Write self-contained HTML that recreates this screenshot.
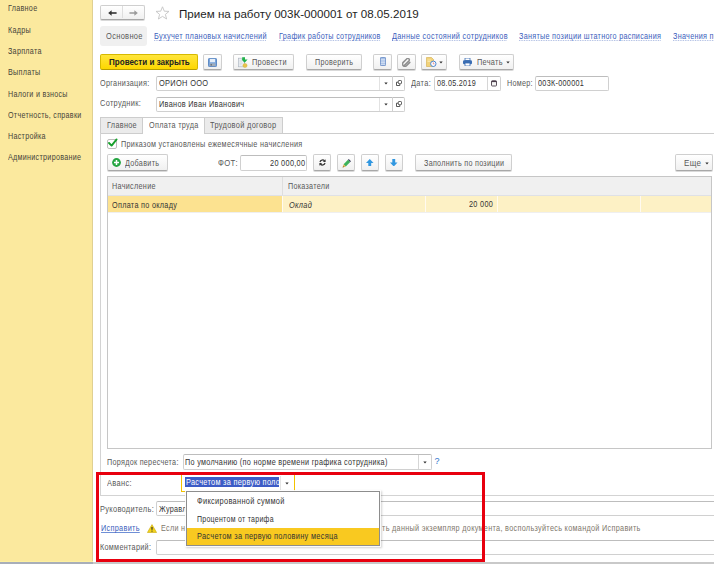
<!DOCTYPE html>
<html><head><meta charset="utf-8">
<style>
*{box-sizing:border-box;margin:0;padding:0}
html,body{width:714px;height:564px;overflow:hidden;background:#fff;font-family:"Liberation Sans",sans-serif;font-size:8.5px;color:#4d4d4d}
.a{position:absolute}
.t{position:absolute;white-space:nowrap;transform-origin:0 0}
#side{position:absolute;left:0;top:0;width:93px;height:564px;background:#fbe99e;border-right:1px solid #e0d092}
.btn{position:absolute;border:1px solid #cfcfcf;border-bottom-color:#a8a8a8;border-radius:2px;background:linear-gradient(#fff,#f0f0f0);box-shadow:0 1px 0 #d9d9d9}
.inp{position:absolute;border:1px solid #d0d0d0;border-top-color:#bdbdbd;border-radius:2px;background:#fff}
</style></head><body>
<div id="side"></div>
<div class="t" style="left:8px;top:3px;line-height:10px;color:#46443a;letter-spacing:0.35px;transform:scaleX(0.842);">Главное</div>
<div class="t" style="left:8px;top:25px;line-height:10px;color:#46443a;letter-spacing:0.35px;transform:scaleX(0.847);">Кадры</div>
<div class="t" style="left:8px;top:46px;line-height:10px;color:#46443a;letter-spacing:0.35px;transform:scaleX(0.842);">Зарплата</div>
<div class="t" style="left:8px;top:67px;line-height:10px;color:#46443a;letter-spacing:0.35px;transform:scaleX(0.847);">Выплаты</div>
<div class="t" style="left:8px;top:89px;line-height:10px;color:#46443a;letter-spacing:0.35px;transform:scaleX(0.838);">Налоги и взносы</div>
<div class="t" style="left:8px;top:110px;line-height:10px;color:#46443a;letter-spacing:0.35px;transform:scaleX(0.837);">Отчетность, справки</div>
<div class="t" style="left:8px;top:131px;line-height:10px;color:#46443a;letter-spacing:0.35px;transform:scaleX(0.842);">Настройка</div>
<div class="t" style="left:8px;top:152px;line-height:10px;color:#46443a;letter-spacing:0.35px;transform:scaleX(0.843);">Администрирование</div>
<div class="t" style="left:179px;top:7px;line-height:14px;color:#1e1e1e;font-size:11.6px;">Прием на работу 003К-000001 от 08.05.2019</div>
<div class="a" style="left:100px;top:26px;width:47px;height:20px;background:#f0f0f0;border-radius:3px"></div>
<div class="t" style="left:106px;top:31px;line-height:10px;color:#585858;letter-spacing:0.35px;transform:scaleX(0.881);">Основное</div>
<div class="t" style="left:154px;top:31px;line-height:10px;color:#3b5ebc;letter-spacing:0.35px;transform:scaleX(0.867);text-decoration:underline dotted #a8b8e0;text-underline-offset:1px;text-decoration-skip-ink:none;">Бухучет плановых начислений</div>
<div class="t" style="left:278.6px;top:31px;line-height:10px;color:#3b5ebc;letter-spacing:0.35px;transform:scaleX(0.846);text-decoration:underline dotted #a8b8e0;text-underline-offset:1px;text-decoration-skip-ink:none;">График работы сотрудников</div>
<div class="t" style="left:392px;top:31px;line-height:10px;color:#3b5ebc;letter-spacing:0.35px;transform:scaleX(0.860);text-decoration:underline dotted #a8b8e0;text-underline-offset:1px;text-decoration-skip-ink:none;">Данные состояний сотрудников</div>
<div class="t" style="left:519.4px;top:31px;line-height:10px;color:#3b5ebc;letter-spacing:0.35px;transform:scaleX(0.848);text-decoration:underline dotted #a8b8e0;text-underline-offset:1px;text-decoration-skip-ink:none;">Занятые позиции штатного расписания</div>
<div class="t" style="left:673.4px;top:31px;line-height:10px;color:#3b5ebc;letter-spacing:0.35px;transform:scaleX(0.848);text-decoration:underline dotted #a8b8e0;text-underline-offset:1px;text-decoration-skip-ink:none;">Значения показателей</div>
<div class="a" style="left:100px;top:54px;width:98px;height:16px;border:1px solid #d6b900;border-bottom-color:#b89d00;border-radius:2px;background:linear-gradient(#ffe53b,#fdd700)"></div>
<div class="t" style="left:109px;top:57px;line-height:10px;color:#222;font-weight:bold;transform:scaleX(0.948);">Провести и закрыть</div>
<div class="btn" style="left:203px;top:54px;width:19px;height:16px;"></div>
<div class="btn" style="left:233px;top:54px;width:61px;height:16px;"></div>
<div class="t" style="left:251.5px;top:57px;line-height:10px;color:#585858;letter-spacing:0.35px;transform:scaleX(0.864);">Провести</div>
<div class="btn" style="left:306px;top:54px;width:56px;height:16px;"></div>
<div class="t" style="left:315px;top:57px;line-height:10px;color:#585858;letter-spacing:0.35px;transform:scaleX(0.839);">Проверить</div>
<div class="btn" style="left:373px;top:54px;width:19px;height:16px;"></div>
<div class="btn" style="left:397px;top:54px;width:19px;height:16px;"></div>
<div class="btn" style="left:421px;top:54px;width:26px;height:16px;"></div>
<div class="btn" style="left:459px;top:54px;width:55px;height:16px;"></div>
<div class="t" style="left:477px;top:57px;line-height:10px;color:#585858;letter-spacing:0.35px;transform:scaleX(0.865);">Печать</div>
<div class="t" style="left:100px;top:78px;line-height:10px;color:#585858;letter-spacing:0.35px;transform:scaleX(0.856);">Организация:</div>
<div class="inp" style="left:156px;top:76px;width:249px;height:15px;"></div>
<div class="a" style="left:379px;top:77px;width:1px;height:13px;background:#e2e2e2"></div>
<div class="a" style="left:392px;top:76px;width:1px;height:15px;background:#cfcfcf"></div>
<div class="t" style="left:159px;top:78px;line-height:10px;color:#333333;letter-spacing:0.35px;transform:scaleX(0.875);">ОРИОН ООО</div>
<div class="t" style="left:411px;top:78px;line-height:10px;color:#585858;letter-spacing:0.35px;transform:scaleX(0.872);">Дата:</div>
<div class="inp" style="left:434px;top:76px;width:67px;height:15px;"></div>
<div class="a" style="left:487px;top:77px;width:1px;height:13px;background:#d6d6d6"></div>
<div class="t" style="left:436.5px;top:78px;line-height:10px;color:#333333;letter-spacing:0.35px;transform:scaleX(0.847);">08.05.2019</div>
<div class="t" style="left:506.7px;top:78px;line-height:10px;color:#585858;letter-spacing:0.35px;transform:scaleX(0.846);">Номер:</div>
<div class="inp" style="left:535px;top:76px;width:74px;height:15px;"></div>
<div class="t" style="left:538.3px;top:78px;line-height:10px;color:#333333;letter-spacing:0.35px;transform:scaleX(0.851);">003К-000001</div>
<div class="t" style="left:100px;top:98px;line-height:10px;color:#585858;letter-spacing:0.35px;transform:scaleX(0.872);">Сотрудник:</div>
<div class="inp" style="left:156px;top:97px;width:249px;height:15px;"></div>
<div class="a" style="left:379px;top:98px;width:1px;height:13px;background:#e2e2e2"></div>
<div class="a" style="left:392px;top:97px;width:1px;height:15px;background:#cfcfcf"></div>
<div class="t" style="left:159.2px;top:99px;line-height:10px;color:#333333;letter-spacing:0.35px;transform:scaleX(0.861);">Иванов Иван Иванович</div>
<div class="a" style="left:100px;top:133px;width:614px;height:1px;background:#cdcdcd"></div>
<div class="a" style="left:100px;top:117px;width:43px;height:17px;background:#ebebeb;border:1px solid #cdcdcd"></div>
<div class="t" style="left:106.6px;top:120px;line-height:10px;color:#585858;letter-spacing:0.35px;transform:scaleX(0.856);">Главное</div>
<div class="a" style="left:142px;top:117px;width:63px;height:17px;background:#fff;border:1px solid #cdcdcd;border-bottom:none"></div>
<div class="t" style="left:148.8px;top:120px;line-height:10px;color:#585858;letter-spacing:0.35px;transform:scaleX(0.857);">Оплата труда</div>
<div class="a" style="left:204px;top:117px;width:79px;height:17px;background:#ebebeb;border:1px solid #cdcdcd"></div>
<div class="t" style="left:210.4px;top:120px;line-height:10px;color:#585858;letter-spacing:0.35px;transform:scaleX(0.873);">Трудовой договор</div>
<div class="a" style="left:100px;top:133px;width:1px;height:363px;background:#d3d3d3"></div>
<div class="a" style="left:100px;top:495px;width:614px;height:1px;background:#d3d3d3"></div>
<div class="a" style="left:107px;top:139px;width:10px;height:10px;border:1px solid #bdbdbd;border-radius:2px;background:#fff"></div>
<div class="t" style="left:120.8px;top:139px;line-height:10px;color:#585858;letter-spacing:0.35px;transform:scaleX(0.854);">Приказом установлены ежемесячные начисления</div>
<div class="btn" style="left:107px;top:154px;width:61px;height:17px;"></div>
<div class="t" style="left:125.3px;top:158px;line-height:10px;color:#585858;letter-spacing:0.35px;transform:scaleX(0.850);">Добавить</div>
<div class="t" style="left:217.7px;top:158px;line-height:10px;color:#585858;letter-spacing:0.35px;transform:scaleX(0.908);">ФОТ:</div>
<div class="inp" style="left:240px;top:155px;width:67px;height:16px;"></div>
<div class="t" style="left:270.1px;top:158px;line-height:10px;color:#333333;letter-spacing:0.35px;transform:scaleX(0.864);">20 000,00</div>
<div class="btn" style="left:313px;top:154px;width:18px;height:17px;"></div>
<div class="btn" style="left:337px;top:154px;width:18px;height:17px;"></div>
<div class="btn" style="left:361px;top:154px;width:18px;height:17px;"></div>
<div class="btn" style="left:385px;top:154px;width:18px;height:17px;"></div>
<div class="btn" style="left:415px;top:154px;width:97px;height:17px;"></div>
<div class="t" style="left:423.6px;top:158px;line-height:10px;color:#585858;letter-spacing:0.35px;transform:scaleX(0.845);">Заполнить по позиции</div>
<div class="btn" style="left:675px;top:154px;width:38px;height:17px;"></div>
<div class="t" style="left:684px;top:158px;line-height:10px;color:#585858;letter-spacing:0.35px;transform:scaleX(0.943);">Еще</div>
<div class="a" style="left:107px;top:176px;width:605px;height:273px;border:1px solid #c6c6c6;background:#fff"></div>
<div class="a" style="left:108px;top:177px;width:603px;height:18px;background:#f0f0f0"></div>
<div class="a" style="left:108px;top:195px;width:603px;height:1px;background:#dfe1e6"></div>
<div class="a" style="left:282px;top:177px;width:1px;height:18px;background:#dedede"></div>
<div class="t" style="left:112.4px;top:181px;line-height:10px;color:#585858;letter-spacing:0.35px;transform:scaleX(0.851);">Начисление</div>
<div class="t" style="left:288px;top:181px;line-height:10px;color:#585858;letter-spacing:0.35px;transform:scaleX(0.844);">Показатели</div>
<div class="a" style="left:108px;top:196px;width:603px;height:16px;background:#fdf1c5"></div>
<div class="a" style="left:108px;top:196px;width:174px;height:16px;background:#fce290"></div>
<div class="a" style="left:108px;top:212px;width:603px;height:1px;background:#efefef"></div>
<div class="a" style="left:282px;top:196px;width:1px;height:16px;background:#fffaf0"></div>
<div class="a" style="left:425px;top:196px;width:1px;height:16px;background:#fffaf0"></div>
<div class="a" style="left:497px;top:196px;width:1px;height:16px;background:#fffaf0"></div>
<div class="a" style="left:640px;top:196px;width:1px;height:16px;background:#fffaf0"></div>
<div class="t" style="left:112.4px;top:200px;line-height:10px;color:#333333;letter-spacing:0.35px;transform:scaleX(0.853);">Оплата по окладу</div>
<div class="t" style="left:288.5px;top:200px;line-height:10px;color:#333333;font-style:italic;letter-spacing:0.35px;transform:scaleX(0.869);">Оклад</div>
<div class="t" style="left:468.5px;top:199px;line-height:10px;color:#333333;letter-spacing:0.35px;transform:scaleX(0.858);">20 000</div>
<div class="t" style="left:107px;top:457px;line-height:10px;color:#585858;letter-spacing:0.35px;transform:scaleX(0.845);">Порядок пересчета:</div>
<div class="inp" style="left:182.7px;top:454px;width:249px;height:16px;"></div>
<div class="a" style="left:418px;top:455px;width:1px;height:14px;background:#d6d6d6"></div>
<div class="t" style="left:185px;top:457px;line-height:10px;color:#333333;letter-spacing:0.35px;transform:scaleX(0.852);">По умолчанию (по норме времени графика сотрудника)</div>
<div class="t" style="left:434.5px;top:456px;line-height:10px;color:#2f74cc;font-size:9px">?</div>
<div class="t" style="left:107px;top:478px;line-height:10px;color:#585858;letter-spacing:0.35px;transform:scaleX(0.879);">Аванс:</div>
<div class="t" style="left:100.2px;top:504px;line-height:10px;color:#585858;letter-spacing:0.35px;transform:scaleX(0.876);">Руководитель:</div>
<div class="inp" style="left:156px;top:501px;width:560px;height:15px;"></div>
<div class="t" style="left:158.5px;top:504px;line-height:10px;color:#333333;letter-spacing:0.35px;transform:scaleX(0.850);">Журавлев Сергей Петрович</div>
<div class="t" style="left:100.8px;top:523px;line-height:10px;color:#3b5ebc;letter-spacing:0.35px;transform:scaleX(0.859);text-decoration:underline #6f8fd6;text-underline-offset:1px;text-decoration-skip-ink:none;">Исправить</div>
<div class="t" style="left:160.7px;top:523px;line-height:10px;color:#80776b;letter-spacing:0.35px;transform:scaleX(0.850);">Если необходимо изменить</div>
<div class="t" style="left:381.7px;top:523px;line-height:10px;color:#80776b;letter-spacing:0.35px;transform:scaleX(0.856);">ть данный экземпляр документа, воспользуйтесь командой Исправить</div>
<div class="t" style="left:100.2px;top:542px;line-height:10px;color:#585858;letter-spacing:0.35px;transform:scaleX(0.852);">Комментарий:</div>
<div class="inp" style="left:156px;top:540px;width:560px;height:15px;"></div>
<div class="a" style="left:181px;top:473px;width:114px;height:19px;border:1px solid #f3c200;background:#fff"></div>
<div class="a" style="left:280px;top:476px;width:1px;height:14px;background:#e4e4e4"></div>
<div class="a" style="left:184.9px;top:477.2px;width:94px;height:9.7px;background:#3d5cc6"></div>
<div class="a" style="left:184.9px;top:470px;width:94px;height:20px;overflow:hidden">
<div class="t" style="left:0.8px;top:7px;line-height:10px;color:#fff;letter-spacing:0.35px;transform:scaleX(0.862);">Расчетом за первую половину месяца</div>
</div>
<div class="a" style="left:0px;top:562px;width:714px;height:2px;background:#c9c9c9"></div>
<div class="a" style="left:0px;top:562px;width:93px;height:2px;background:#a8aeb9"></div>
<div class="a" style="left:0px;top:561px;width:93px;height:1px;background:#fdf0a0"></div>
<div class="a" style="left:96px;top:472px;width:389px;height:90px;border:3px solid #e8000e"></div>
<div class="a" style="left:186px;top:491px;width:194px;height:55px;background:#fff;border:1px solid #8d8d8d;box-shadow:0 0 0 1px rgba(255,255,255,0.9),1px 1px 2px 1px rgba(0,0,0,0.18)"></div>
<div class="t" style="left:196.8px;top:496px;line-height:10px;color:#333333;letter-spacing:0.35px;transform:scaleX(0.874);">Фиксированной суммой</div>
<div class="t" style="left:196.8px;top:514px;line-height:10px;color:#333333;letter-spacing:0.35px;transform:scaleX(0.820);">Процентом от тарифа</div>
<div class="a" style="left:187px;top:527.6px;width:192px;height:17px;background:#f9c920"></div>
<div class="t" style="left:196.8px;top:531px;line-height:10px;color:#333333;letter-spacing:0.35px;transform:scaleX(0.866);">Расчетом за первую половину месяца</div>
<div class="btn" style="left:100px;top:5px;width:45px;height:15px;"></div>
<div class="a" style="left:122px;top:6px;width:1px;height:12px;background:#dedede"></div>
<svg class="a" style="left:107.5px;top:9.5px" width="9" height="6" viewBox="0 0 9 6"><path d="M8.6 3 H2.5" stroke="#333" stroke-width="1.6"/><path d="M0.2 3 L3.6 0.2 V5.8 Z" fill="#333"/></svg>
<svg class="a" style="left:129px;top:9.5px" width="9" height="6" viewBox="0 0 9 6"><path d="M0.4 3 H6.5" stroke="#9a9a9a" stroke-width="1.5"/><path d="M8.8 3 L5.4 0.2 V5.8 Z" fill="#9a9a9a"/></svg>
<svg class="a" style="left:155px;top:6px" width="15" height="14" viewBox="0 0 15 14"><path d="M7.5 0.8 L9.3 5.2 L14 5.4 L10.4 8.4 L11.6 13 L7.5 10.4 L3.4 13 L4.6 8.4 L1 5.4 L5.7 5.2 Z" fill="#fff" stroke="#c4c4c4" stroke-width="0.9"/></svg>
<svg class="a" style="left:208px;top:57.5px" width="9" height="9" viewBox="0 0 9 9"><rect x="0.45" y="0.45" width="8.1" height="8.1" rx="0.9" fill="#7aa5dc" stroke="#4f7fc0" stroke-width="0.9"/><rect x="2" y="0.9" width="5" height="3.3" fill="#e6eef8"/><rect x="1.7" y="5.5" width="5.6" height="2.6" fill="#a3adb8"/><rect x="2.6" y="6" width="1.2" height="1.6" fill="#5d6670"/></svg>
<svg class="a" style="left:237.5px;top:56.5px" width="10" height="11" viewBox="0 0 10 11"><rect x="0.4" y="1.2" width="6" height="8.6" fill="#eef1f5" stroke="#b0b8c2" stroke-width="0.7"/><path d="M1.4 3.3H4.8M1.4 4.8H4.2M1.4 6.3H4.5M1.4 7.8H3.6" stroke="#c2cad3" stroke-width="0.5"/><path d="M4.2 0.2 H7 V2.6 H9.6 L6.6 5.8 L3.6 2.6 H4.2 Z" fill="#22b24c"/><circle cx="7" cy="8.5" r="2.1" fill="#e8c44a" stroke="#d1a935" stroke-width="0.4"/></svg>
<svg class="a" style="left:380px;top:57.3px" width="6" height="9" viewBox="0 0 6 9"><rect x="0.4" y="0.4" width="5.2" height="8.2" rx="0.9" fill="#9bb8e3" stroke="#5b82c2" stroke-width="0.8"/><path d="M0.8 2.3H5.2M0.8 4H5.2M0.8 5.7H5.2M0.8 7.3H5.2" stroke="#f2f6fc" stroke-width="0.7"/></svg>
<svg class="a" style="left:402px;top:57.5px" width="9" height="9" viewBox="0 0 9 9"><path d="M2.2 7.6 L7 2.8 A1.5 1.5 0 0 0 4.9 0.7 L1.2 4.4 A2.3 2.3 0 0 0 4.5 7.7 L7.8 4.4" stroke="#8f8f8f" stroke-width="1.5" fill="none" stroke-linecap="round"/></svg>
<svg class="a" style="left:425.5px;top:57px" width="11" height="10" viewBox="0 0 11 10"><path d="M0.5 0.5 H5.5 L7.5 2.5 V9.5 H0.5 Z" fill="#f1d27a" stroke="#d4ad4a" stroke-width="0.6"/><path d="M1.5 3H5M1.5 4.5H4.5" stroke="#fff3c8" stroke-width="0.6"/><circle cx="7.3" cy="6.8" r="2.7" fill="#fff" stroke="#4b86d0" stroke-width="1"/><path d="M7.3 5.3 V6.9 H8.5" stroke="#d9534f" stroke-width="0.6" fill="none"/></svg>
<svg class="a" style="left:439px;top:61.0px" width="4" height="3" viewBox="0 0 4 3"><path d="M0.3 0.5 L3.7 0.5 L2 2.6 Z" fill="#333"/></svg>
<svg class="a" style="left:463px;top:57.5px" width="9" height="8" viewBox="0 0 9 8"><rect x="2" y="0" width="5" height="2.5" fill="#fff" stroke="#3a6db3" stroke-width="0.8"/><rect x="0" y="2.3" width="9" height="4" rx="1.2" fill="#3a6db3"/><rect x="2" y="5" width="5" height="3" fill="#fff" stroke="#3a6db3" stroke-width="0.8"/></svg>
<svg class="a" style="left:506px;top:61.0px" width="4" height="3" viewBox="0 0 4 3"><path d="M0.3 0.5 L3.7 0.5 L2 2.6 Z" fill="#333"/></svg>
<svg class="a" style="left:383.5px;top:81.5px" width="4" height="3" viewBox="0 0 4 3"><path d="M0.3 0.5 L3.7 0.5 L2 2.6 Z" fill="#333"/></svg>
<svg class="a" style="left:396px;top:80.3px" width="6" height="6" viewBox="0 0 6 6"><rect x="2.3" y="0.5" width="3.2" height="3.2" rx="0.8" fill="#fff" stroke="#444" stroke-width="0.9"/><path d="M2 2.2 H0.5 V5.5 H3.8 V4" stroke="#444" stroke-width="0.9" fill="none"/></svg>
<svg class="a" style="left:383.5px;top:102.5px" width="4" height="3" viewBox="0 0 4 3"><path d="M0.3 0.5 L3.7 0.5 L2 2.6 Z" fill="#333"/></svg>
<svg class="a" style="left:396px;top:101.3px" width="6" height="6" viewBox="0 0 6 6"><rect x="2.3" y="0.5" width="3.2" height="3.2" rx="0.8" fill="#fff" stroke="#444" stroke-width="0.9"/><path d="M2 2.2 H0.5 V5.5 H3.8 V4" stroke="#444" stroke-width="0.9" fill="none"/></svg>
<svg class="a" style="left:490.5px;top:80px" width="6" height="6.5" viewBox="0 0 6 6.5"><rect x="0.5" y="0.8" width="5" height="5.2" rx="0.8" fill="#f4f4f4" stroke="#4a3d4a" stroke-width="0.9"/><rect x="0.5" y="0.8" width="5" height="1.3" fill="#4a3d4a"/></svg>
<svg class="a" style="left:107px;top:138px" width="11" height="10" viewBox="0 0 11 10"><path d="M2 5 L4.6 7.6 L9.6 1.4" stroke="#17a02c" stroke-width="1.9" fill="none" stroke-linecap="round" stroke-linejoin="round"/></svg>
<svg class="a" style="left:111.5px;top:158px" width="9" height="9" viewBox="0 0 9 9"><circle cx="4.5" cy="4.5" r="4.4" fill="#25a542"/><path d="M4.5 2 V7 M2 4.5 H7" stroke="#fff" stroke-width="1.5"/></svg>
<svg class="a" style="left:319px;top:159.3px" width="7" height="7" viewBox="0 0 7 7"><path d="M1 3 A2.6 2.6 0 0 1 5.6 2" stroke="#3a3a3a" stroke-width="1.3" fill="none"/><path d="M6.6 0.3 V3 H3.9 Z" fill="#3a3a3a"/><path d="M6 4 A2.6 2.6 0 0 1 1.4 5" stroke="#3a3a3a" stroke-width="1.3" fill="none"/><path d="M0.4 6.7 V4 H3.1 Z" fill="#3a3a3a"/></svg>
<svg class="a" style="left:341.5px;top:158.5px" width="9" height="9" viewBox="0 0 9 9"><path d="M1.6 5.2 L6 0.8 L8.2 3 L3.8 7.4 Z" fill="#3cb35a"/><path d="M6 0.8 L6.8 0 L9 2.2 L8.2 3 Z" fill="#3a3a5a"/><path d="M1.6 5.2 L3.8 7.4 L0.6 8.6 Z" fill="#d9b04a"/><path d="M0.6 8.6 L1.1 7.3 L1.9 8.1 Z" fill="#5a4020"/></svg>
<svg class="a" style="left:366px;top:158.8px" width="7.5" height="7.5" viewBox="0 0 7.5 7.5"><path d="M3.75 0 L7.5 4 H5.2 V7.5 H2.3 V4 H0 Z" fill="#3197e0"/></svg>
<svg class="a" style="left:390px;top:158.8px" width="7.5" height="7.5" viewBox="0 0 7.5 7.5"><path d="M3.75 7.5 L7.5 3.5 H5.2 V0 H2.3 V3.5 H0 Z" fill="#3197e0"/></svg>
<svg class="a" style="left:704.5px;top:162.0px" width="4" height="3" viewBox="0 0 4 3"><path d="M0.3 0.5 L3.7 0.5 L2 2.6 Z" fill="#333"/></svg>
<svg class="a" style="left:422.5px;top:460.5px" width="4" height="3" viewBox="0 0 4 3"><path d="M0.3 0.5 L3.7 0.5 L2 2.6 Z" fill="#333"/></svg>
<svg class="a" style="left:284.5px;top:481.5px" width="4" height="3" viewBox="0 0 4 3"><path d="M0.3 0.5 L3.7 0.5 L2 2.6 Z" fill="#333"/></svg>
<svg class="a" style="left:146.5px;top:524px" width="10" height="9" viewBox="0 0 10 9"><path d="M5 0.6 L9.6 8.5 H0.4 Z" fill="#f2d21b" stroke="#c9a90d" stroke-width="0.6" stroke-linejoin="round"/><path d="M5 3 V5.8" stroke="#222" stroke-width="1.1"/><circle cx="5" cy="7.1" r="0.6" fill="#222"/></svg>
</body></html>
